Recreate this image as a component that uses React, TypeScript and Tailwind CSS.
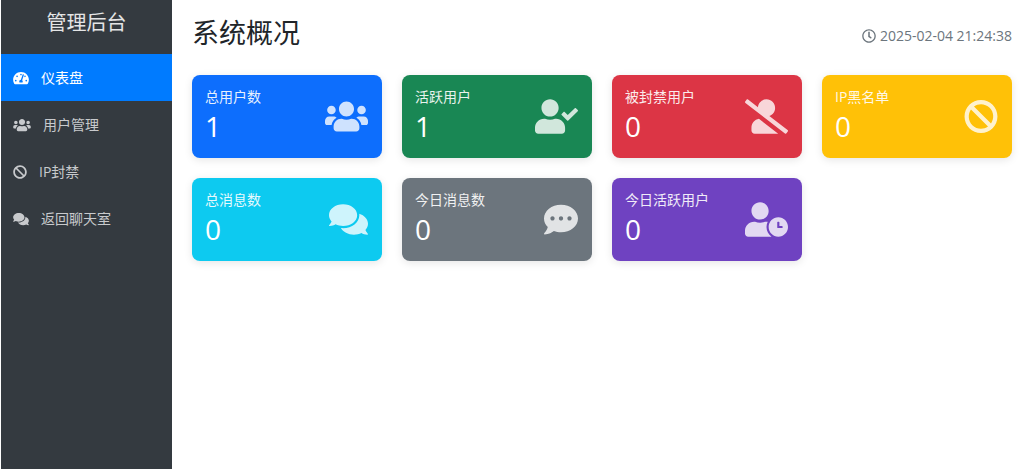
import type { IconType } from 'react-icons'
import {
  FaBan,
  FaCommentDots,
  FaComments,
  FaRegClock,
  FaTachometerAlt,
  FaUserCheck,
  FaUserClock,
  FaUserSlash,
  FaUsers,
} from 'react-icons/fa'

interface NavItem {
  label: string
  icon: IconType
  iconWidth: string
  active?: boolean
}

interface Stat {
  label: string
  value: number
  icon: IconType
  iconWidth: string
  color: string
}

const navItems: NavItem[] = [
  { label: '仪表盘', icon: FaTachometerAlt, iconWidth: 'w-4', active: true },
  { label: '用户管理', icon: FaUsers, iconWidth: 'w-[18px]' },
  { label: 'IP封禁', icon: FaBan, iconWidth: 'w-3.5' },
  { label: '返回聊天室', icon: FaComments, iconWidth: 'w-4' },
]

const stats: Stat[] = [
  { label: '总用户数', value: 1, icon: FaUsers, iconWidth: 'w-[43px]', color: 'bg-[#0d6efd]' },
  { label: '活跃用户', value: 1, icon: FaUserCheck, iconWidth: 'w-[43px]', color: 'bg-[#198754]' },
  { label: '被封禁用户', value: 0, icon: FaUserSlash, iconWidth: 'w-[43px]', color: 'bg-[#dc3545]' },
  { label: 'IP黑名单', value: 0, icon: FaBan, iconWidth: 'w-[34px]', color: 'bg-[#ffc107]' },
  { label: '总消息数', value: 0, icon: FaComments, iconWidth: 'w-[39px]', color: 'bg-[#0dcaf0]' },
  { label: '今日消息数', value: 0, icon: FaCommentDots, iconWidth: 'w-[34px]', color: 'bg-[#6c757d]' },
  { label: '今日活跃用户', value: 0, icon: FaUserClock, iconWidth: 'w-[43px]', color: 'bg-[#6f42c1]' },
]

function Sidebar() {
  return (
    <aside className="w-[171px] shrink-0 bg-[#343a40] text-[#c8cacd]">
      <div className="flex h-[54px] items-center justify-center pb-2 text-xl text-[#e4e5e6]">
        管理后台
      </div>
      <nav>
        {navItems.map(({ label, icon: Icon, iconWidth, active }) => (
          <a
            key={label}
            href="#"
            className={`flex h-[47px] items-center gap-3 px-3 text-sm ${
              active ? 'bg-[#007bff] text-white' : 'hover:bg-[#495057]'
            }`}
          >
            <Icon className={`h-3.5 ${iconWidth}`} />
            {label}
          </a>
        ))}
      </nav>
    </aside>
  )
}

function StatCard({ label, value, icon: Icon, iconWidth, color }: Stat) {
  return (
    <div
      className={`flex items-center justify-between rounded-lg py-3 pr-3.5 pl-[13px] text-white shadow-[0_2px_8px_rgba(0,0,0,0.1)] ${color}`}
    >
      <div>
        <h2 className="text-sm leading-5 opacity-90">{label}</h2>
        <p className="text-[28px] leading-[39px]">{value}</p>
      </div>
      <Icon className={`h-[35px] opacity-80 ${iconWidth}`} />
    </div>
  )
}

export default function App() {
  return (
    <div className="flex min-h-screen bg-white pb-1.5 pl-px font-['Open_Sans','Noto_Sans_CJK_SC',sans-serif]">
      <Sidebar />
      <main className="min-w-0 flex-1 pr-3 pl-5">
        <header className="flex h-[75px] items-center justify-between pb-2">
          <h1 className="text-[27px] text-[#212529]">系统概况</h1>
          <div className="flex items-center gap-1 pt-1 text-sm text-[#6c757d]">
            <FaRegClock className="size-3.5" />
            <time dateTime="2025-02-04T21:24:38">2025-02-04 21:24:38</time>
          </div>
        </header>
        <div className="grid grid-cols-4 gap-5">
          {stats.map((stat) => (
            <StatCard key={stat.label} {...stat} />
          ))}
        </div>
      </main>
    </div>
  )
}
